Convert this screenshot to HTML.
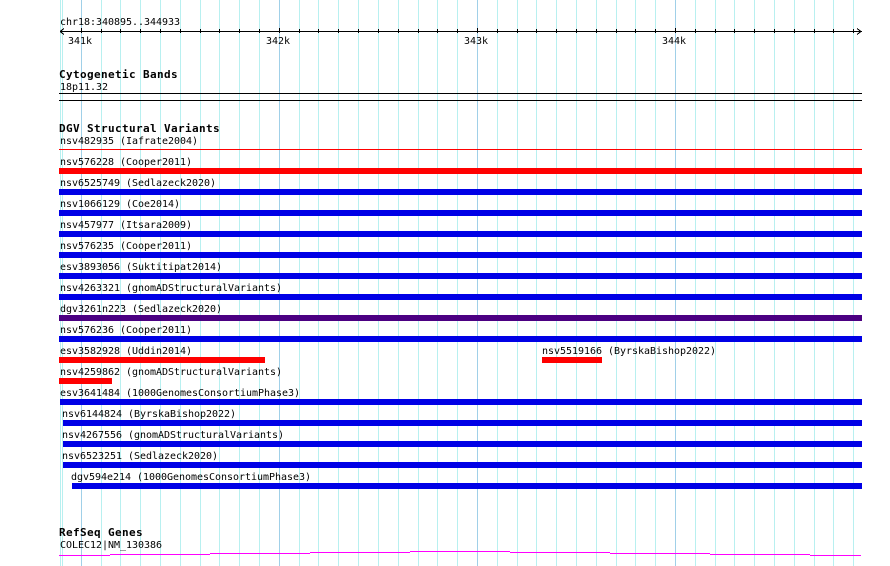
<!DOCTYPE html>
<html><head><meta charset="utf-8"><style>
html,body{margin:0;padding:0;background:#fff;width:890px;height:566px;overflow:hidden}
svg{display:block;position:absolute;left:0;top:0}
text{font-family:"DejaVu Sans Mono","Liberation Mono",monospace;font-size:10px;letter-spacing:-0.02px;fill:#000;white-space:pre}
text.b{font-weight:bold;font-size:11px;letter-spacing:0.38px}
</style></head><body>
<svg width="890" height="566" viewBox="0 0 890 566" shape-rendering="crispEdges">
<path stroke="#b8f0f0" stroke-width="1" fill="none" d="M60.5 0V566M62.5 0V566M101.5 0V566M120.5 0V566M140.5 0V566M160.5 0V566M180.5 0V566M200.5 0V566M219.5 0V566M239.5 0V566M259.5 0V566M299.5 0V566M318.5 0V566M338.5 0V566M358.5 0V566M378.5 0V566M398.5 0V566M418.5 0V566M437.5 0V566M457.5 0V566M497.5 0V566M517.5 0V566M536.5 0V566M556.5 0V566M576.5 0V566M596.5 0V566M616.5 0V566M635.5 0V566M655.5 0V566M695.5 0V566M715.5 0V566M734.5 0V566M754.5 0V566M774.5 0V566M794.5 0V566M814.5 0V566M833.5 0V566M853.5 0V566"/>
<path stroke="#a0d0e8" stroke-width="1" fill="none" d="M81.5 0V566M279.5 0V566M477.5 0V566M675.5 0V566"/>
<path stroke="#000" stroke-width="1" fill="none" d="M60 31.5H862M60 31.5L64 28.5M60 31.5L64 34.5M861 31.5L857 28.5M861 31.5L857 34.5M59 93.5H862M59 100.5H862"/>
<path stroke="#000" stroke-width="1" fill="none" d="M81.5 28V33M101.5 29V33M120.5 29V33M140.5 29V33M160.5 29V33M180.5 29V33M200.5 29V33M219.5 29V33M239.5 29V33M259.5 29V33M279.5 28V33M299.5 29V33M318.5 29V33M338.5 29V33M358.5 29V33M378.5 29V33M398.5 29V33M418.5 29V33M437.5 29V33M457.5 29V33M477.5 28V33M497.5 29V33M517.5 29V33M536.5 29V33M556.5 29V33M576.5 29V33M596.5 29V33M616.5 29V33M635.5 29V33M655.5 29V33M675.5 28V33M695.5 29V33M715.5 29V33M734.5 29V33M754.5 29V33M774.5 29V33M794.5 29V33M814.5 29V33M833.5 29V33M853.5 29V33"/>
<rect x="59" y="149" width="803" height="1" fill="#f00"/>
<rect x="59" y="168" width="803" height="6" fill="#f00"/>
<g fill="#0000e6">
<rect x="59" y="189" width="803" height="6"/>
<rect x="59" y="210" width="803" height="6"/>
<rect x="59" y="231" width="803" height="6"/>
<rect x="59" y="252" width="803" height="6"/>
<rect x="59" y="273" width="803" height="6"/>
<rect x="59" y="294" width="803" height="6"/>
<rect x="59" y="336" width="803" height="6"/>
<rect x="60" y="399" width="802" height="6"/>
<rect x="63" y="420" width="799" height="6"/>
<rect x="63" y="441" width="799" height="6"/>
<rect x="63" y="462" width="799" height="6"/>
<rect x="72" y="483" width="790" height="6"/>
</g>
<rect x="59" y="315" width="803" height="6" fill="#4b0082"/>
<rect x="59" y="357" width="206" height="6" fill="#f00"/>
<rect x="542" y="357" width="60" height="6" fill="#f00"/>
<rect x="59" y="378" width="53" height="6" fill="#f00"/>
<path stroke="#ff00ff" stroke-width="1" fill="none" d="M59 555.5H110M110 554.5H210M210 553.5H310M310 552.5H410M410 551.5H510M510 552.5H610M610 553.5H710M710 554.5H810M810 555.5H861"/>
<text x="60" y="25">chr18:340895..344933</text>
<text x="68" y="44">341k</text>
<text x="266" y="44">342k</text>
<text x="464" y="44">343k</text>
<text x="662" y="44">344k</text>
<text x="59" y="78" class="b">Cytogenetic Bands</text>
<text x="60" y="90">18p11.32</text>
<text x="59" y="132" class="b">DGV Structural Variants</text>
<text x="60" y="144">nsv482935 (Iafrate2004)</text>
<text x="60" y="165">nsv576228 (Cooper2011)</text>
<text x="60" y="186">nsv6525749 (Sedlazeck2020)</text>
<text x="60" y="207">nsv1066129 (Coe2014)</text>
<text x="60" y="228">nsv457977 (Itsara2009)</text>
<text x="60" y="249">nsv576235 (Cooper2011)</text>
<text x="60" y="270">esv3893056 (Suktitipat2014)</text>
<text x="60" y="291">nsv4263321 (gnomADStructuralVariants)</text>
<text x="60" y="312">dgv3261n223 (Sedlazeck2020)</text>
<text x="60" y="333">nsv576236 (Cooper2011)</text>
<text x="60" y="354">esv3582928 (Uddin2014)</text>
<text x="542" y="354">nsv5519166 (ByrskaBishop2022)</text>
<text x="60" y="375">nsv4259862 (gnomADStructuralVariants)</text>
<text x="60" y="396">esv3641484 (1000GenomesConsortiumPhase3)</text>
<text x="62" y="417">nsv6144824 (ByrskaBishop2022)</text>
<text x="62" y="438">nsv4267556 (gnomADStructuralVariants)</text>
<text x="62" y="459">nsv6523251 (Sedlazeck2020)</text>
<text x="71" y="480">dgv594e214 (1000GenomesConsortiumPhase3)</text>
<text x="59" y="536" class="b">RefSeq Genes</text>
<text x="60" y="548">COLEC12|NM_130386</text>
</svg>
</body></html>
